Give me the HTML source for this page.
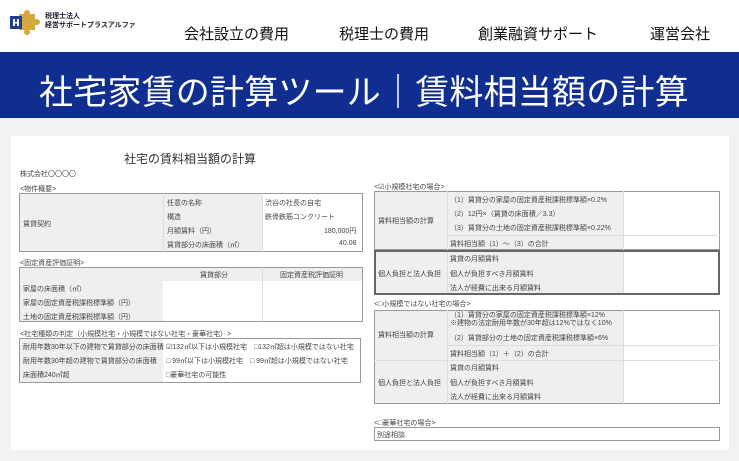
<!DOCTYPE html>
<html><head><meta charset="utf-8"><style>
*{margin:0;padding:0;box-sizing:border-box}
body{width:739px;height:461px;overflow:hidden;background:#f2f2f2;font-family:"Liberation Sans","Noto Sans CJK JP",sans-serif;position:relative}
.a{position:absolute;white-space:nowrap}
.hdr{position:absolute;left:0;top:0;width:739px;height:52px;background:#fff}
.nav{font-size:15px;color:#111;top:23px}
.band{position:absolute;left:0;top:52px;width:739px;height:66px;background:#0f2e8f}
.card{position:absolute;left:11px;top:136px;width:718px;height:314px;background:#fff}
.s{font-size:7px;color:#444}
.g{position:absolute;background:#efefef}
.w{position:absolute;background:#fff}
.b{position:absolute;border:1px solid #999}
.l{position:absolute;background:#ddd}
</style></head><body>
<div class="hdr"></div>
<svg class="a" style="left:9px;top:10px" width="34" height="26" viewBox="0 0 34 26">
<rect x="10" y="4" width="16" height="16" fill="#d6a640"/>
<rect x="15" y="0" width="6" height="6" rx="3" fill="#d6a640"/>
<rect x="15" y="19" width="6" height="6" rx="3" fill="#d6a640"/>
<rect x="24" y="9" width="7" height="6" rx="3" fill="#d6a640"/>
<rect x="1" y="6" width="12" height="13" fill="#1e3d8f"/>
<rect x="4" y="9" width="2" height="7" fill="#fff"/><rect x="8" y="9" width="2" height="7" fill="#fff"/><rect x="4" y="12" width="6" height="1.5" fill="#fff"/>
</svg>
<div class="a" style="left:45px;top:12px;font-size:7px;color:#223;line-height:9px;font-weight:bold">税理士法人<br>経営サポートプラスアルファ</div>
<div class="a nav" style="left:184px">会社設立の費用</div>
<div class="a nav" style="left:339px">税理士の費用</div>
<div class="a nav" style="left:478px">創業融資サポート</div>
<div class="a nav" style="left:650px">運営会社</div>
<div class="band"></div>
<div class="a" style="left:39px;top:65px;font-size:34px;color:#fff;letter-spacing:0.2px">社宅家賃の計算ツール｜賃料相当額の計算</div>
<div class="card"></div>
<div class="a" style="left:124px;top:150px;font-size:12px;color:#333">社宅の賃料相当額の計算</div>
<div class="a s" style="left:20px;top:169px">株式会社〇〇〇〇</div>
<div class="a s" style="left:20px;top:184px">&lt;物件概要&gt;</div>
<div class="g" style="left:19px;top:193px;width:243px;height:59px"></div>
<div class="b" style="left:19px;top:193px;width:344px;height:59px"></div>
<div class="l" style="left:163px;top:193px;width:1px;height:59px"></div>
<div class="l" style="left:262px;top:193px;width:1px;height:59px"></div>
<div class="a s" style="left:23px;top:219px">賃貸契約</div>
<div class="a s" style="left:167px;top:198px">任意の名称</div><div class="a s" style="left:265px;top:198px">渋谷の社長の自宅</div>
<div class="a s" style="left:167px;top:212px">構造</div><div class="a s" style="left:265px;top:212px">鉄骨鉄筋コンクリート</div>
<div class="a s" style="left:167px;top:226px">月額賃料（円）</div><div class="a s" style="left:324px;top:226px">180,000円</div>
<div class="a s" style="left:167px;top:240px">賃貸部分の床面積（㎡）</div><div class="a s" style="left:339px;top:240px">40.08</div>
<div class="a s" style="left:20px;top:258px">&lt;固定資産評価証明&gt;</div>
<div class="g" style="left:19px;top:267px;width:344px;height:55px"></div>
<div class="w" style="left:163px;top:281px;width:200px;height:41px"></div>
<div class="b" style="left:19px;top:267px;width:344px;height:55px"></div>
<div class="l" style="left:262px;top:267px;width:1px;height:55px"></div>
<div class="a s" style="left:200px;top:270px">賃貸部分</div><div class="a s" style="left:280px;top:270px">固定資産税評価証明</div>
<div class="a s" style="left:23px;top:284px">家屋の床面積（㎡）</div>
<div class="a s" style="left:23px;top:298px">家屋の固定資産税課税標準額（円）</div>
<div class="a s" style="left:23px;top:312px">土地の固定資産税課税標準額（円）</div>
<div class="a s" style="left:20px;top:329px">&lt;社宅種類の判定（小規模社宅・小規模ではない社宅・豪華社宅）&gt;</div>
<div class="g" style="left:19px;top:338px;width:144px;height:45px"></div>
<div class="b" style="left:19px;top:338px;width:342px;height:45px"></div>
<div class="a s" style="left:23px;top:342px">耐用年数30年以下の建物で賃貸部分の床面積</div>
<div class="a s" style="left:23px;top:356px">耐用年数30年超の建物で賃貸部分の床面積</div>
<div class="a s" style="left:23px;top:370px">床面積240㎡超</div>
<div class="a s" style="left:166px;top:342px">☑132㎡以下は小規模社宅　□132㎡超は小規模ではない社宅</div>
<div class="a s" style="left:166px;top:356px">□ 99㎡以下は小規模社宅　□ 99㎡超は小規模ではない社宅</div>
<div class="a s" style="left:166px;top:370px">□豪華社宅の可能性</div>

<div class="a s" style="left:374px;top:182px">&lt;☑小規模社宅の場合&gt;</div>
<div class="g" style="left:374px;top:191px;width:249px;height:104px"></div>
<div class="b" style="left:374px;top:191px;width:346px;height:59px"></div>
<div class="l" style="left:447px;top:191px;width:1px;height:104px"></div>
<div class="l" style="left:623px;top:191px;width:1px;height:104px"></div>
<div class="l" style="left:447px;top:235px;width:273px;height:1px"></div>
<div class="b" style="left:374px;top:250px;width:346px;height:45px;border:2px solid #666"></div>
<div class="a s" style="left:378px;top:216px">賃料相当額の計算</div>
<div class="a s" style="left:450px;top:195px">（1）賃貸分の家屋の固定資産税課税標準額×0.2%</div>
<div class="a s" style="left:450px;top:209px">（2）12円×（賃貸の床面積／3.3）</div>
<div class="a s" style="left:450px;top:223px">（3）賃貸分の土地の固定資産税課税標準額×0.22%</div>
<div class="a s" style="left:450px;top:239px">賃料相当額（1）〜（3）の合計</div>
<div class="a s" style="left:378px;top:269px">個人負担と法人負担</div>
<div class="a s" style="left:450px;top:254px">賃貸の月額賃料</div>
<div class="a s" style="left:450px;top:269px">個人が負担すべき月額賃料</div>
<div class="a s" style="left:450px;top:283px">法人が経費に出来る月額賃料</div>

<div class="a s" style="left:374px;top:299px">&lt;□小規模ではない社宅の場合&gt;</div>
<div class="g" style="left:374px;top:310px;width:249px;height:94px"></div>
<div class="b" style="left:374px;top:310px;width:346px;height:94px"></div>
<div class="l" style="left:447px;top:310px;width:1px;height:94px"></div>
<div class="l" style="left:623px;top:310px;width:1px;height:94px"></div>
<div class="l" style="left:447px;top:345px;width:273px;height:1px"></div>
<div class="l" style="left:374px;top:360px;width:346px;height:1px"></div>
<div class="a s" style="left:378px;top:330px">賃料相当額の計算</div>
<div class="a s" style="left:450px;top:312px;line-height:8px">（1）賃貸分の家屋の固定資産税課税標準額×12%<br>※建物の法定耐用年数が30年超は12%ではなく10%</div>
<div class="a s" style="left:450px;top:333px">（2）賃貸部分の土地の固定資産税課税標準額×6%</div>
<div class="a s" style="left:450px;top:349px">賃料相当額（1）＋（2）の合計</div>
<div class="a s" style="left:378px;top:378px">個人負担と法人負担</div>
<div class="a s" style="left:450px;top:363px">賃貸の月額賃料</div>
<div class="a s" style="left:450px;top:378px">個人が負担すべき月額賃料</div>
<div class="a s" style="left:450px;top:392px">法人が経費に出来る月額賃料</div>

<div class="a s" style="left:374px;top:418px">&lt;□豪華社宅の場合&gt;</div>
<div class="b" style="left:374px;top:427px;width:346px;height:14px"></div>
<div class="a s" style="left:377px;top:430px">別途相談</div>
</body></html>
